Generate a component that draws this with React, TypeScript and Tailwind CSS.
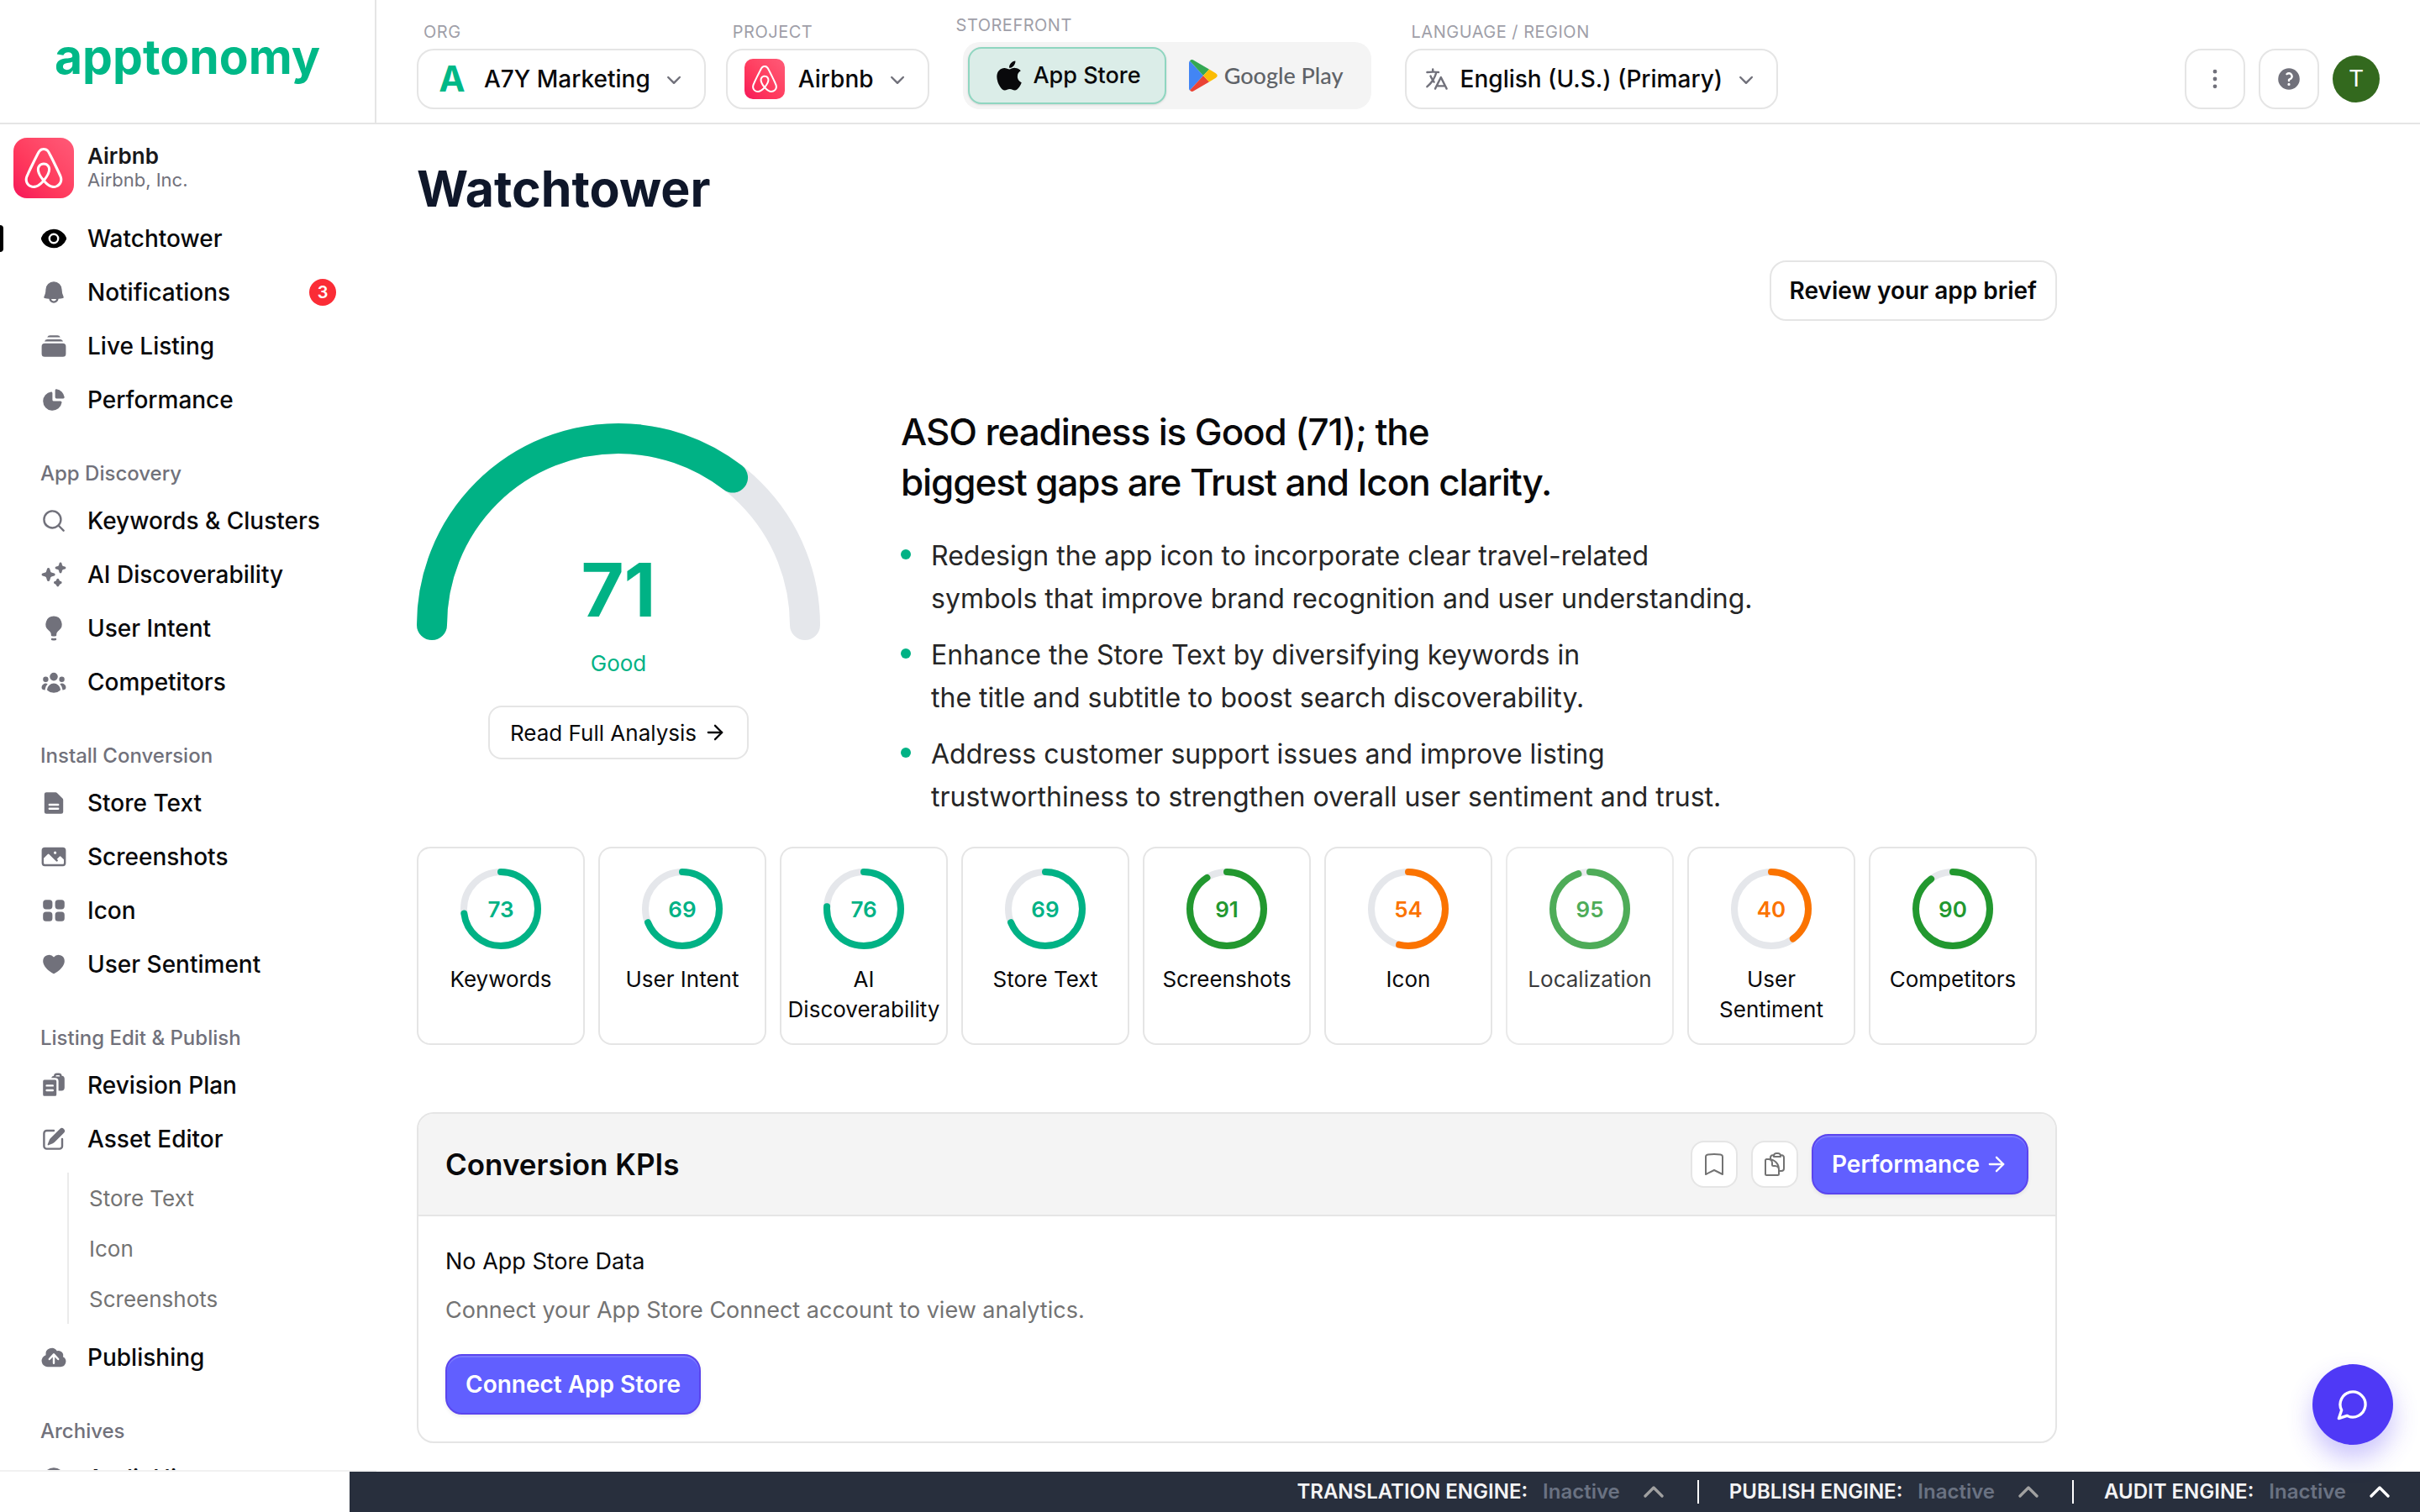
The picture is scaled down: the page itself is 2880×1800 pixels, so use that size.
import type { ReactNode } from "react";
import type { IconType } from "react-icons";
import { FaApple } from "react-icons/fa";
import { SiAirbnb } from "react-icons/si";
import {
  HiMiniBell,
  HiMiniChartPie,
  HiMiniChevronDown,
  HiMiniClipboardDocumentList,
  HiMiniClock,
  HiMiniCloudArrowUp,
  HiMiniDocumentText,
  HiMiniEllipsisVertical,
  HiMiniEye,
  HiMiniHeart,
  HiMiniLanguage,
  HiMiniLightBulb,
  HiMiniMagnifyingGlass,
  HiMiniPencilSquare,
  HiMiniPhoto,
  HiMiniQuestionMarkCircle,
  HiMiniRectangleStack,
  HiMiniSparkles,
  HiMiniSquares2X2,
  HiMiniUserGroup,
  HiOutlineBookmark,
  HiOutlineClipboardDocument,
} from "react-icons/hi2";
import { ArrowRight, ChevronUp } from "lucide-react";

interface NavEntry {
  label: string;
  icon: IconType;
  active?: boolean;
  badge?: number;
  children?: string[];
}

interface NavSection {
  title?: string;
  items: NavEntry[];
}

const sections: NavSection[] = [
  {
    items: [
      { label: "Watchtower", icon: HiMiniEye, active: true },
      { label: "Notifications", icon: HiMiniBell, badge: 3 },
      { label: "Live Listing", icon: HiMiniRectangleStack },
      { label: "Performance", icon: HiMiniChartPie },
    ],
  },
  {
    title: "App Discovery",
    items: [
      { label: "Keywords & Clusters", icon: HiMiniMagnifyingGlass },
      { label: "AI Discoverability", icon: HiMiniSparkles },
      { label: "User Intent", icon: HiMiniLightBulb },
      { label: "Competitors", icon: HiMiniUserGroup },
    ],
  },
  {
    title: "Install Conversion",
    items: [
      { label: "Store Text", icon: HiMiniDocumentText },
      { label: "Screenshots", icon: HiMiniPhoto },
      { label: "Icon", icon: HiMiniSquares2X2 },
      { label: "User Sentiment", icon: HiMiniHeart },
    ],
  },
  {
    title: "Listing Edit & Publish",
    items: [
      { label: "Revision Plan", icon: HiMiniClipboardDocumentList },
      {
        label: "Asset Editor",
        icon: HiMiniPencilSquare,
        children: ["Store Text", "Icon", "Screenshots"],
      },
      { label: "Publishing", icon: HiMiniCloudArrowUp },
    ],
  },
  {
    title: "Archives",
    items: [{ label: "Audit History", icon: HiMiniClock }],
  },
];

const scores = [
  { label: "Keywords", value: 73, color: "#00b285" },
  { label: "User Intent", value: 69, color: "#00b285" },
  { label: "AI Discoverability", value: 76, color: "#00b285" },
  { label: "Store Text", value: 69, color: "#00b285" },
  { label: "Screenshots", value: 91, color: "#22982f" },
  { label: "Icon", value: 54, color: "#fb7300" },
  { label: "Localization", value: 95, color: "#22982f", muted: true },
  { label: "User Sentiment", value: 40, color: "#fb7300" },
  { label: "Competitors", value: 90, color: "#22982f" },
];

const findings = [
  ["Redesign the app icon to incorporate clear travel-related", "symbols that improve brand recognition and user understanding."],
  ["Enhance the Store Text by diversifying keywords in", "the title and subtitle to boost search discoverability."],
  ["Address customer support issues and improve listing", "trustworthiness to strengthen overall user sentiment and trust."],
];

const engines = [
  { name: "TRANSLATION ENGINE:", dim: true },
  { name: "PUBLISH ENGINE:", dim: true },
  { name: "AUDIT ENGINE:", dim: false },
];

const outlineButton = "border-2 border-[#e5e5e5] bg-white";
const primaryButton =
  "flex h-[72px] items-center gap-1.5 rounded-[20px] border-2 border-[#5a45ee] bg-[#615fff] px-[22px] text-[28px] font-semibold text-white shadow-[inset_0_2px_0_#7a78ff,0_2px_4px_rgba(0,0,0,0.08)]";

const AirbnbTile = ({ className, iconClass }: { className: string; iconClass: string }) => (
  <span
    className={`flex shrink-0 items-center justify-center bg-gradient-to-tr from-[#f5135a] via-[#ff385c] via-40% to-[#ff5a78] text-white ${className}`}
  >
    <SiAirbnb className={iconClass} />
  </span>
);

const PlayLogo = () => (
  <svg viewBox="0 0 34 38" className="h-[38px] w-[34px]">
    <path d="M1 1.5 L17 19 L1 36.5 Q0 36 0 34 V4 Q0 2 1 1.5Z" fill="#4285f4" />
    <path d="M1 1.5 Q3 -1 6 1 L24 11.500 L17 19Z" fill="#34a853" />
    <path d="M1 36.5 Q3 39 6 37 L24 26.500 L17 19Z" fill="#ea4335" />
    <path d="M24 11.500 L31.500 16 Q36 19 31.500 22 L24 26.500 L17 19Z" fill="#fbbc04" />
  </svg>
);

interface PickerProps {
  id: string;
  label: string;
  children: ReactNode;
}

const Picker = ({ id, label, children }: PickerProps) => (
  <div className="flex flex-col">
    <label htmlFor={id} className="mb-1.5 pl-2 text-[20px] leading-7 tracking-wide text-[#9f9fa9]">
      {label}
    </label>
    <button
      id={id}
      type="button"
      className={`flex h-[72px] items-center rounded-[20px] px-5 text-[28px] font-medium whitespace-nowrap ${outlineButton}`}
    >
      {children}
      <HiMiniChevronDown className="ml-3 size-8 text-[#71717b]" />
    </button>
  </div>
);

const Header = () => (
  <header className="flex h-[148px] shrink-0 border-b-2 border-[#e5e5e5]">
    <div className="flex w-[448px] shrink-0 items-center justify-center border-r-2 border-[#e5e5e5] pb-3">
      <a href="#home" className="text-[57px] leading-none font-bold text-[#00b887]">
        apptonomy
      </a>
    </div>
    <div className="flex grow items-end gap-6 pr-12 pb-4 pl-12">
      <Picker id="org" label="ORG">
        <span className="w-10 text-center text-[42px] leading-none font-bold text-[#00b887]">A</span>
        <span className="ml-[18px]">A7Y Marketing</span>
      </Picker>
      <Picker id="project" label="PROJECT">
        <AirbnbTile className="size-12 rounded-[10px]" iconClass="size-8" />
        <span className="ml-4">Airbnb</span>
      </Picker>
      <div className="flex flex-col">
        <span className="mb-1.5 pl-2 text-[20px] leading-7 tracking-wide text-[#9f9fa9]">STOREFRONT</span>
        <div className="mx-4 flex h-20 items-center rounded-[20px] bg-[#f4f4f4] px-1.5">
          <button
            type="button"
            className="flex h-[68px] w-[236px] items-center justify-center gap-2 rounded-2xl border-2 border-[#8fd6c0] bg-[#dbede8] text-[27px] font-medium shadow-sm"
          >
            <FaApple className="size-10" />
            App Store
          </button>
          <button
            type="button"
            className="flex h-[68px] w-[238px] items-center justify-center gap-2 font-[Lato] text-[27px] font-medium text-[#5f6368]"
          >
            <PlayLogo />
            Google Play
          </button>
        </div>
      </div>
      <Picker id="language" label="LANGUAGE / REGION">
        <HiMiniLanguage className="size-8 text-[#71717b]" />
        <span className="ml-3">English (U.S.) (Primary)</span>
      </Picker>
      <div className="ml-auto flex items-center gap-4">
        <button type="button" aria-label="More" className={`grid size-[72px] place-items-center rounded-[20px] ${outlineButton}`}>
          <HiMiniEllipsisVertical className="size-8 text-[#71717b]" />
        </button>
        <button type="button" aria-label="Help" className={`grid size-[72px] place-items-center rounded-[20px] ${outlineButton}`}>
          <HiMiniQuestionMarkCircle className="size-8 text-[#71717b]" />
        </button>
        <button type="button" className="size-14 rounded-full bg-[#33691e] font-[Roboto] text-[28px] text-white">
          T
        </button>
      </div>
    </div>
  </header>
);

const NavItem = ({ label, icon: Icon, active, badge, children }: NavEntry) => (
  <li>
    <a href="#nav" className="flex h-16 items-center pr-12">
      <span className={`h-8 w-1 rounded-r-sm ${active ? "bg-black" : ""}`} />
      <Icon className={`ml-11 size-8 ${active ? "text-black" : "text-[#71717b]"}`} />
      <span className="ml-6 text-[28px] font-medium whitespace-nowrap">{label}</span>
      {badge && (
        <span className="ml-auto grid size-8 place-items-center rounded-full bg-[#fb2c36] text-[20px] font-semibold text-white">
          {badge}
        </span>
      )}
    </a>
    {children && (
      <ul className="my-2 ml-20 border-l-2 border-[#ebebeb] pl-6">
        {children.map((child) => (
          <li key={child}>
            <a href="#nav" className="flex h-[60px] items-center text-[26px] text-[#737373]">
              {child}
            </a>
          </li>
        ))}
      </ul>
    )}
  </li>
);

const Sidebar = () => (
  <aside className="flex w-[448px] shrink-0 flex-col overflow-hidden border-b-2 border-[#f1f1f1]">
    <div className="flex shrink-0 items-center gap-4 p-4">
      <AirbnbTile className="size-[72px] rounded-2xl" iconClass="size-12" />
      <div>
        <p className="text-[26px] leading-7 font-semibold text-[#18181b]">Airbnb</p>
        <p className="text-[22px] leading-7 text-[#71717b]">Airbnb, Inc.</p>
      </div>
    </div>
    <nav>
      {sections.map(({ title, items }) => (
        <div key={title ?? "top"}>
          {title && <h2 className="mt-10 mb-2 pl-12 text-[24px] leading-8 font-medium text-[#71717b]">{title}</h2>}
          <ul>
            {items.map((item) => (
              <NavItem key={item.label} {...item} />
            ))}
          </ul>
        </div>
      ))}
    </nav>
  </aside>
);

const Gauge = ({ value }: { value: number }) => {
  const arc = "M18 240 A222 222 0 0 1 462 240";
  return (
    <div className="flex w-[480px] shrink-0 flex-col items-center">
      <div className="grid w-full">
        <svg viewBox="0 0 480 258" className="col-start-1 row-start-1 w-full" fill="none" strokeWidth="36" strokeLinecap="round">
          <path d={arc} stroke="#e5e7eb" />
          <path d={arc} stroke="#00b285" pathLength="100" strokeDasharray={`${value} 200`} />
        </svg>
        <span className="col-start-1 row-start-1 self-end justify-self-center pb-4 text-[88px] leading-[88px] font-bold text-[#00b285]">
          {value}
        </span>
      </div>
      <p className="mt-2.5 text-[26px] leading-9 text-[#00b285]">Good</p>
      <button type="button" className={`mt-8 flex h-16 items-center gap-2 rounded-2xl px-6 text-[26px] ${outlineButton}`}>
        Read Full Analysis
        <ArrowRight className="size-7" />
      </button>
    </div>
  );
};

const ScoreRing = ({ value, color }: { value: number; color: string }) => (
  <div className="grid size-24 place-items-center">
    <svg viewBox="0 0 96 96" className="col-start-1 row-start-1 size-24 -rotate-90" fill="none" strokeWidth="8">
      <circle cx="48" cy="48" r="44" stroke="#e5e7eb" />
      <circle cx="48" cy="48" r="44" stroke={color} strokeLinecap="round" pathLength="100" strokeDasharray={`${value} 100`} />
    </svg>
    <span className="col-start-1 row-start-1 text-[26px] font-semibold" style={{ color }}>
      {value}
    </span>
  </div>
);

const KpiCard = () => (
  <section className="mt-20 overflow-hidden rounded-[20px] border-2 border-[#e5e5e5]">
    <div className="flex items-center gap-4 border-b-2 border-[#e5e5e5] bg-[#f4f4f4] px-8 py-6">
      <h2 className="mr-auto text-[35px] font-semibold">Conversion KPIs</h2>
      <button type="button" aria-label="Bookmark" className={`grid size-14 place-items-center rounded-2xl text-[#737373] ${outlineButton}`}>
        <HiOutlineBookmark className="size-8" />
      </button>
      <button type="button" aria-label="Copy" className={`grid size-14 place-items-center rounded-2xl text-[#737373] ${outlineButton}`}>
        <HiOutlineClipboardDocument className="size-8" />
      </button>
      <button type="button" className={primaryButton}>
        Performance
        <ArrowRight className="size-7" />
      </button>
    </div>
    <div className="px-8 py-8">
      <p className="text-[27px] leading-[44px]">No App Store Data</p>
      <p className="mt-4 text-[27px] leading-[40px] text-[#737373]">
        Connect your App Store Connect account to view analytics.
      </p>
      <button type="button" className={`mt-8 ${primaryButton}`}>
        Connect App Store
      </button>
    </div>
  </section>
);

const StatusBar = () => (
  <footer className="flex h-12 shrink-0">
    <div className="w-[416px] shrink-0 bg-white" />
    <div className="flex grow items-center justify-end bg-[#282f3d] pr-7 text-[24px] font-semibold">
      {engines.map(({ name, dim }, i) => (
        <div key={name} className="flex items-center">
          {i > 0 && <span className="mr-9 ml-8 h-7 w-0.5 bg-white" />}
          <span className="text-[#f4f4f5]">{name}</span>
          <span className="ml-[18px] text-[#6a7282]">Inactive</span>
          <button type="button" aria-label="Expand" className={`ml-5 ${dim ? "text-[#a1a1a1]" : "text-white"}`}>
            <ChevronUp className="size-10" strokeWidth={2} />
          </button>
        </div>
      ))}
    </div>
  </footer>
);

export default function App() {
  return (
    <div className="relative flex h-screen flex-col overflow-hidden bg-white font-[Inter,sans-serif] text-[#09090b]">
      <Header />
      <div className="flex min-h-0 grow">
        <Sidebar />
        <main className="grow overflow-hidden px-12 pt-11">
          <div className="max-w-[1952px]">
            <h1 className="text-[59px] leading-[66px] font-bold text-[#0f172a]">Watchtower</h1>
            <div className="mt-[52px] flex justify-end">
              <button type="button" className={`h-[72px] rounded-[20px] px-[22px] text-[28px] font-semibold ${outlineButton}`}>
                Review your app brief
              </button>
            </div>
            <section className="mt-[102px] flex gap-24">
              <div className="pt-5">
                <Gauge value={71} />
              </div>
              <div>
                <h2 className="text-[44px] leading-[60px] font-medium tracking-tight">
                  ASO readiness is Good (71); the
                  <br />
                  biggest gaps are Trust and Icon clarity.
                </h2>
                <ul className="mt-8 flex flex-col gap-4 text-[32px] leading-[51px] text-[#262626]">
                  {findings.map(([first, second]) => (
                    <li key={first} className="flex gap-6">
                      <span className="mt-[18px] size-3 shrink-0 rounded-full bg-[#00b285]" />
                      <p>
                        {first}
                        <br />
                        {second}
                      </p>
                    </li>
                  ))}
                </ul>
              </div>
            </section>
            <div className="mt-[34px] flex gap-4">
              {scores.map(({ label, value, color, muted }) => (
                <a
                  key={label}
                  href="#score"
                  className={`flex h-[236px] w-[200px] flex-col items-center rounded-2xl px-1.5 pt-6 ${outlineButton} ${muted ? "opacity-80" : ""}`}
                >
                  <ScoreRing value={value} color={color} />
                  <span className="mt-[18px] text-center text-[26px] leading-9">{label}</span>
                </a>
              ))}
            </div>
            <KpiCard />
          </div>
        </main>
      </div>
      <StatusBar />
      <button
        type="button"
        aria-label="Open chat"
        className="absolute right-8 bottom-20 grid size-24 place-items-center rounded-full bg-[#4f39f6] text-white shadow-[0_16px_30px_rgba(79,57,246,0.3)]"
      >
        <svg viewBox="0 0 24 24" className="size-10" fill="none" stroke="currentColor" strokeWidth="2" strokeLinecap="round" strokeLinejoin="round">
          <path d="M7.900 20A9 9 0 1 0 4 16.100L2 22Z" />
        </svg>
      </button>
    </div>
  );
}
